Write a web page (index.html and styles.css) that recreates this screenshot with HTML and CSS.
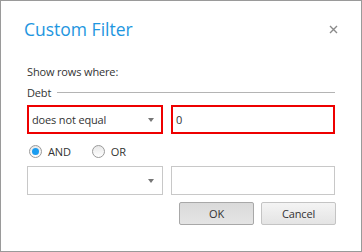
FILE: index.html
```html
<!DOCTYPE html>
<html>
<head>
<meta charset="utf-8">
<link rel="stylesheet" href="styles.css">
</head>
<body>
<div class="dialog">
  <div class="header">
    <div class="title">Custom Filter</div>
    <svg class="close" width="9" height="9" viewBox="0 0 9 9"><path d="M1 1L8 8M8 1L1 8" stroke="#8a8a8a" stroke-width="1.4"/></svg>
  </div>
  <div class="label">Show rows where:</div>
  <div class="field">
    <span class="field-name">Debt</span>
    <span class="rule"></span>
  </div>
  <div class="row">
    <div class="select invalid">
      <span class="select-text">does not equal</span>
      <span class="arrow"></span>
    </div>
    <div class="input invalid"><span class="input-text">0</span></div>
  </div>
  <div class="radios">
    <label class="radio"><span class="circle checked"></span><span class="radio-text">AND</span></label>
    <label class="radio"><span class="circle"></span><span class="radio-text">OR</span></label>
  </div>
  <div class="row row2">
    <div class="select">
      <span class="select-text"></span>
      <span class="arrow"></span>
    </div>
    <div class="input"></div>
  </div>
  <div class="buttons">
    <div class="btn btn-ok">OK</div>
    <div class="btn btn-cancel">Cancel</div>
  </div>
</div>
</body>
</html>
```
FILE: styles.css
```css
html, body {
  margin: 0;
  padding: 0;
  background: #ffffff;
}
.dialog {
  width: 362px;
  height: 252px;
  box-sizing: border-box;
  border: 1px solid #9a9a9a;
  padding: 0 26px 0 26px;
  font-family: "Open Sans", "Noto Sans", sans-serif;
  font-size: 11px;
  letter-spacing: -0.15px;
  color: #333333;
}
.header {
  display: flex;
  align-items: center;
  justify-content: space-between;
  height: 24px;
  margin-top: 16px;
  margin-left: -3px;
  margin-right: -3px;
}
.title {
  font-size: 17.5px;
  letter-spacing: 0;
  color: #1e96e0;
  line-height: 24px;
}
.close {
  display: block;
}
.label {
  margin-top: 21px;
  line-height: 20px;
}
.field {
  display: flex;
  align-items: center;
  height: 20px;
}
.rule {
  flex: 1;
  height: 1px;
  background: #b4b4b4;
  margin-left: 6px;
}
.row {
  display: flex;
  gap: 8px;
  margin-top: 3px;
}
.select, .input {
  box-sizing: border-box;
  height: 29px;
  border: 1px solid #c8c8c8;
  display: flex;
  align-items: center;
}
.select {
  width: 136px;
  padding: 0 8px 0 4px;
  justify-content: space-between;
}
.input {
  width: 164px;
  padding: 0 4px;
}
.invalid {
  border: 2px solid #ee0000;
}
.select.invalid {
  padding-left: 3px;
  padding-right: 7px;
}
.input.invalid {
  padding-left: 3px;
}
.arrow {
  width: 0;
  height: 0;
  border-left: 3.5px solid transparent;
  border-right: 3.5px solid transparent;
  border-top: 4px solid #767676;
}
.radios {
  display: flex;
  height: 24px;
  align-items: center;
  margin-top: 5px;
  padding-left: 2px;
}
.radio {
  display: flex;
  align-items: center;
  gap: 6px;
  margin-right: 21px;
}
.circle {
  width: 13px;
  height: 13px;
  box-sizing: border-box;
  border-radius: 50%;
  border: 1px solid #9a9a9a;
  background: linear-gradient(#e8e8e8, #ffffff);
  display: flex;
  align-items: center;
  justify-content: center;
}
.circle.checked::after {
  content: "";
  width: 7px;
  height: 7px;
  border-radius: 50%;
  background: #1a9cf0;
}
.row2 {
  margin-top: 3px;
}
.buttons {
  display: flex;
  justify-content: flex-end;
  gap: 7px;
  margin-top: 7px;
  margin-right: -1px;
}
.btn {
  width: 75px;
  height: 23px;
  box-sizing: border-box;
  border-radius: 2px;
  display: flex;
  align-items: center;
  justify-content: center;
  color: #333333;
}
.btn-ok {
  border: 1px solid #a8a8a8;
  background: linear-gradient(#dadada, #e4e4e4);
}
.btn-cancel {
  border: 1px solid #c4c4c4;
  background: linear-gradient(#f4f4f4, #e4e4e4);
}
```
